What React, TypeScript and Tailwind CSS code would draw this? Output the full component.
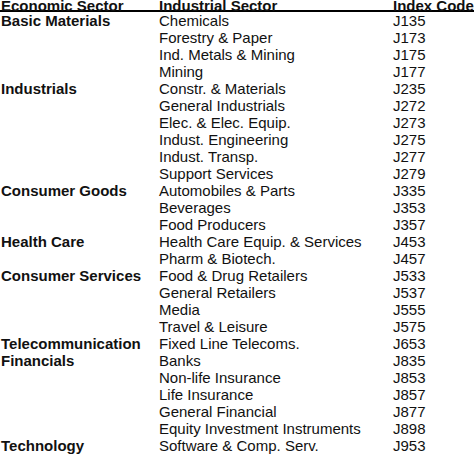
const rows: [string, string, string][] = [
  ['Basic Materials', 'Chemicals', 'J135'],
  ['', 'Forestry & Paper', 'J173'],
  ['', 'Ind. Metals & Mining', 'J175'],
  ['', 'Mining', 'J177'],
  ['Industrials', 'Constr. & Materials', 'J235'],
  ['', 'General Industrials', 'J272'],
  ['', 'Elec. & Elec. Equip.', 'J273'],
  ['', 'Indust. Engineering', 'J275'],
  ['', 'Indust. Transp.', 'J277'],
  ['', 'Support Services', 'J279'],
  ['Consumer Goods', 'Automobiles & Parts', 'J335'],
  ['', 'Beverages', 'J353'],
  ['', 'Food Producers', 'J357'],
  ['Health Care', 'Health Care Equip. & Services', 'J453'],
  ['', 'Pharm & Biotech.', 'J457'],
  ['Consumer Services', 'Food & Drug Retailers', 'J533'],
  ['', 'General Retailers', 'J537'],
  ['', 'Media', 'J555'],
  ['', 'Travel & Leisure', 'J575'],
  ['Telecommunication', 'Fixed Line Telecoms.', 'J653'],
  ['Financials', 'Banks', 'J835'],
  ['', 'Non-life Insurance', 'J853'],
  ['', 'Life Insurance', 'J857'],
  ['', 'General Financial', 'J877'],
  ['', 'Equity Investment Instruments', 'J898'],
  ['Technology', 'Software & Comp. Serv.', 'J953'],
]

export default function App() {
  return (
    <div className="h-[454px] w-[474px] overflow-hidden bg-white font-['Liberation_Sans',Arial,sans-serif] text-[15px] leading-[17px] text-[#111]">
      <div className="-mt-[1px]">
        {/* header sits partly above the top edge, as in the source */}
        <div className="grid h-[13px] grid-cols-[158px_234px_1fr] border-b-2 border-black pl-[1px] font-bold leading-[13px] whitespace-nowrap">
          <span>Economic Sector</span>
          <span>Industrial Sector</span>
          <span>Index Code</span>
        </div>
        {rows.map(([eco, ind, code], i) => (
          <div key={i} className="grid h-[17px] grid-cols-[158px_234px_1fr] pl-[1px] whitespace-nowrap">
            <span className="font-bold">{eco}</span>
            <span>{ind}</span>
            <span>{code}</span>
          </div>
        ))}
      </div>
    </div>
  )
}
